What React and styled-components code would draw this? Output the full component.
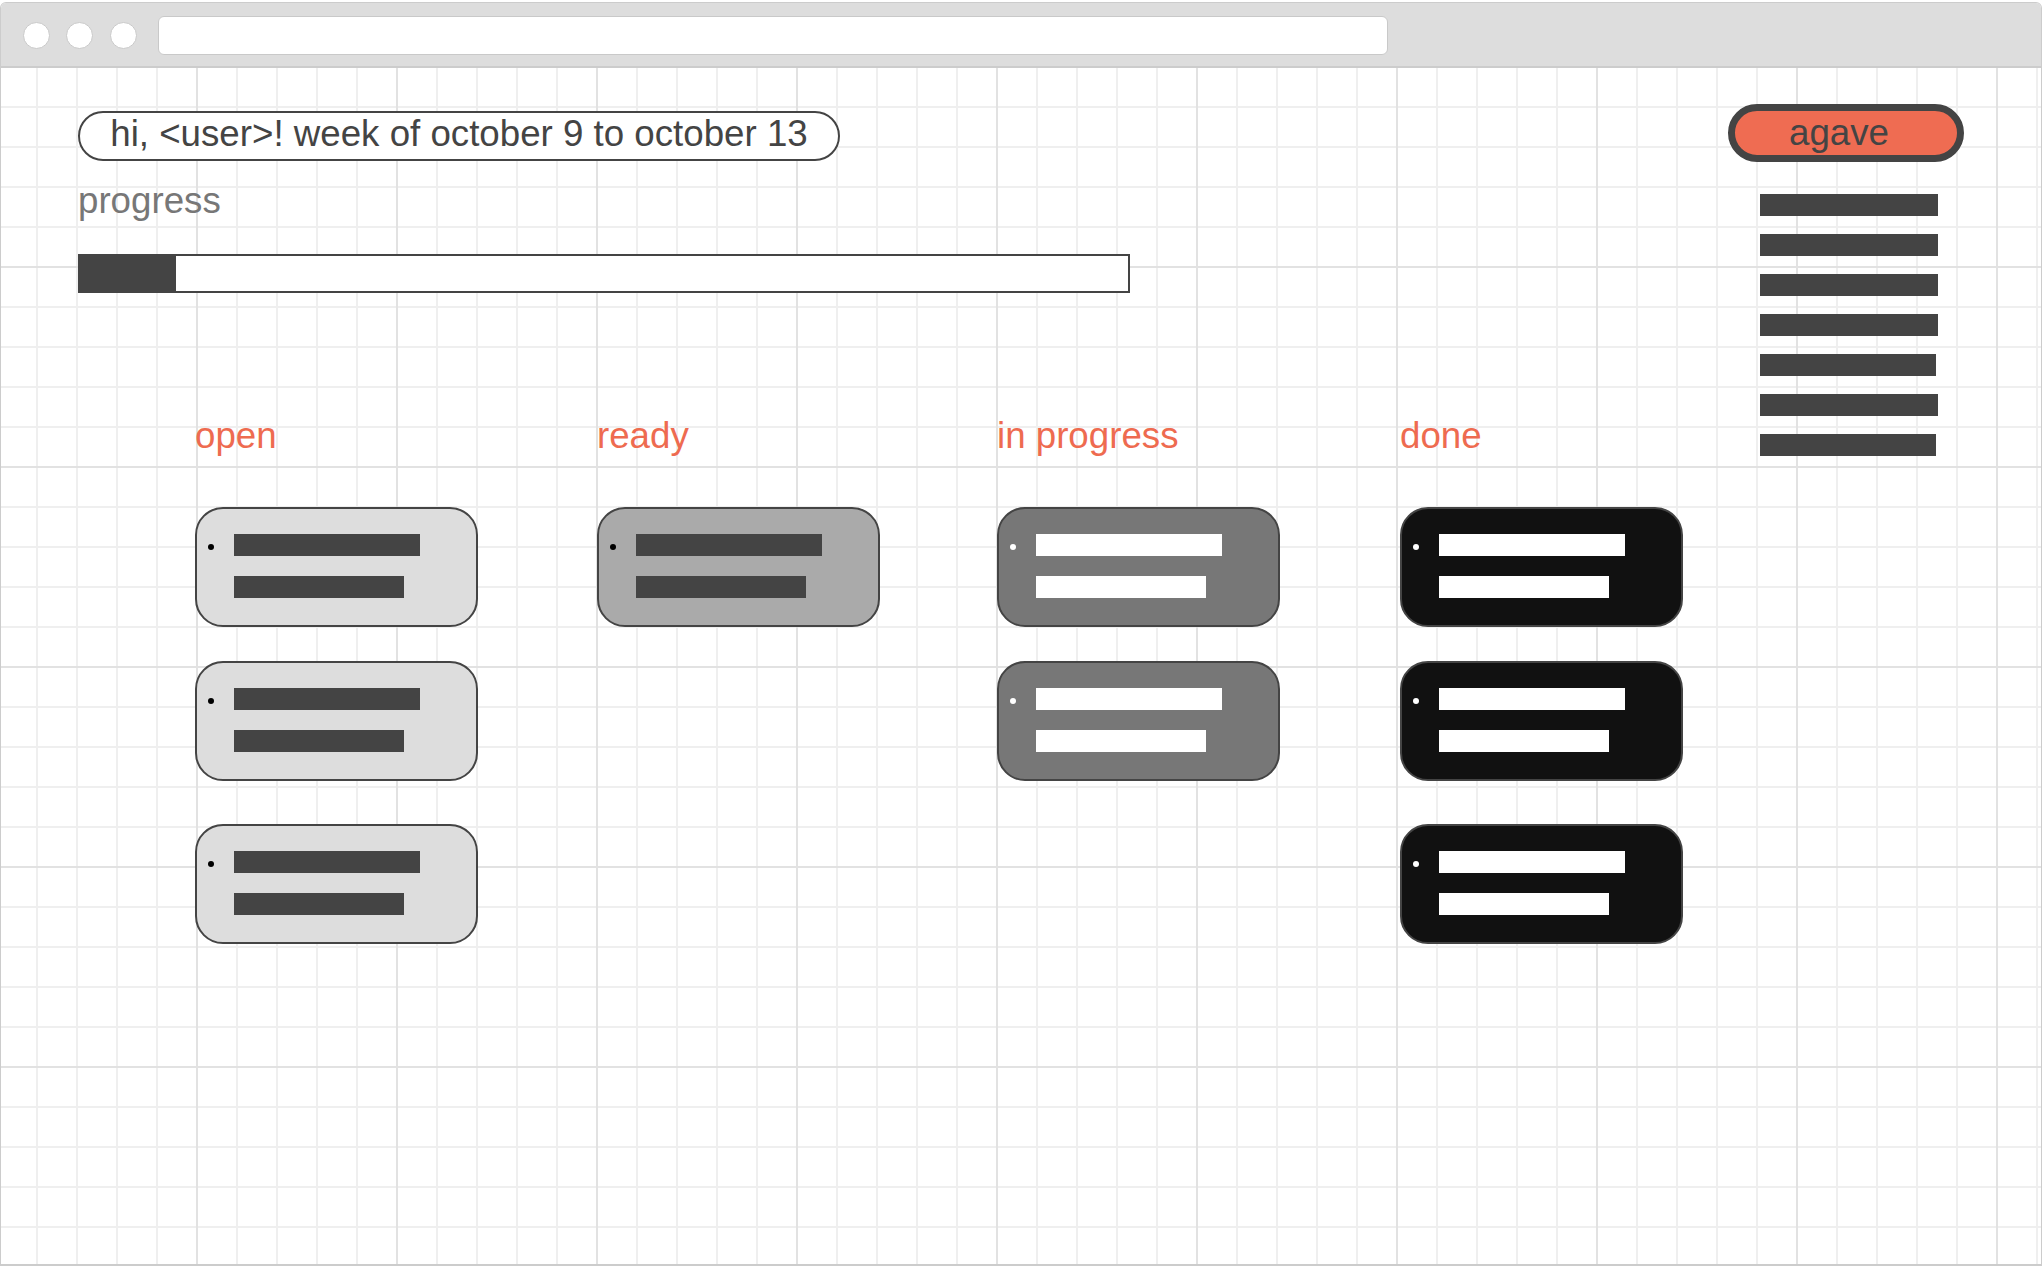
import React from 'react'
import styled, { createGlobalStyle } from 'styled-components'

const GlobalStyle = createGlobalStyle`
  html, body {
    margin: 0;
    padding: 0;
    background: #fff;
    overflow: hidden;
  }
  * {
    box-sizing: border-box;
  }
`

const columns = [
  { title: 'open', tone: 'open', cards: 3 },
  { title: 'ready', tone: 'ready', cards: 1 },
  { title: 'in progress', tone: 'progress', cards: 2 },
  { title: 'done', tone: 'done', cards: 3 },
]

const sideBars = [178, 178, 178, 178, 176, 178, 176]

const tones = {
  open: { bg: '#dddddd', ink: '#444444', dot: '#000000' },
  ready: { bg: '#aaaaaa', ink: '#444444', dot: '#000000' },
  progress: { bg: '#777777', ink: '#ffffff', dot: '#ffffff' },
  done: { bg: '#111111', ink: '#ffffff', dot: '#ffffff' },
}

const App = () => {
  return (
    <>
      <GlobalStyle />
      <Window>
        <TopBar>
          <Light />
          <Light />
          <Light />
          <Address />
        </TopBar>

        <Canvas>
          <Main>
            <Greeting>hi, &lt;user&gt;! week of october 9 to october 13</Greeting>
            <ProgressLabel>progress</ProgressLabel>
            <ProgressTrack>
              <ProgressFill style={{ width: '96px' }} />
            </ProgressTrack>

            <Board>
              {columns.map((col) => (
                <Column key={col.title}>
                  <ColumnTitle>{col.title}</ColumnTitle>
                  <CardStack>
                    {Array.from({ length: col.cards }).map((_, i) => (
                      <Card key={i} $tone={col.tone}>
                        <Dot $tone={col.tone} />
                        <Lines>
                          <Line $tone={col.tone} $w={186} />
                          <Line $tone={col.tone} $w={170} />
                        </Lines>
                      </Card>
                    ))}
                  </CardStack>
                </Column>
              ))}
            </Board>
          </Main>

          <Sidebar>
            <AgaveButton>agave</AgaveButton>
            <MenuList>
              {sideBars.map((w, i) => (
                <MenuBar key={i} $w={w} />
              ))}
            </MenuList>
          </Sidebar>
        </Canvas>
      </Window>
    </>
  )
}

const Window = styled.div`
  margin-top: 2px;
  width: 2042px;
  height: 1264px;
  border: 1px solid #cccccc;
  border-bottom-width: 2px;
  border-radius: 6px 6px 0 0;
  display: flex;
  flex-direction: column;
  overflow: hidden;
  font-family: "Liberation Sans", Arial, sans-serif;
  font-size: 36.7px;
`

const TopBar = styled.div`
  height: 65px;
  padding: 2px 0 0 21.5px;
  background: #dddddd;
  border-bottom: 2px solid #cccccc;
  display: flex;
  align-items: center;
  gap: 16.5px;
  flex-shrink: 0;
`

const Light = styled.span`
  width: 27px;
  height: 27px;
  border-radius: 50%;
  background: #ffffff;
  border: 1.5px solid #c9c9c9;
`

const Address = styled.div`
  margin-left: 4.5px;
  width: 1230px;
  height: 39px;
  background: #ffffff;
  border: 1.5px solid #c9c9c9;
  border-radius: 6px;
`

const Canvas = styled.div`
  flex: 1;
  display: flex;
  padding: 36px 77px 0 77px;
  background-color: #ffffff;
  background-image:
    linear-gradient(to right, #e2e2e2 0 2px, transparent 2px),
    linear-gradient(to bottom, #e2e2e2 0 2px, transparent 2px),
    linear-gradient(to right, #efefef 0 2px, transparent 2px),
    linear-gradient(to bottom, #efefef 0 2px, transparent 2px);
  background-size: 200px 200px, 200px 200px, 40px 40px, 40px 40px;
  background-position: -5px -2px, -5px -2px, -5px -2px, -5px -2px;
`

const Main = styled.div`
  flex: 1;
  padding-top: 7px;
  display: flex;
  flex-direction: column;
  align-items: flex-start;
`

const Greeting = styled.div`
  width: 762px;
  height: 50px;
  padding-bottom: 5px;
  border: 2px solid #444444;
  border-radius: 25px;
  background: #ffffff;
  color: #444444;
  line-height: 42px;
  text-align: center;
  white-space: nowrap;
`

const ProgressLabel = styled.div`
  margin-top: 21.5px;
  color: #777777;
  line-height: 36px;
`

const ProgressTrack = styled.div`
  margin-top: 35.5px;
  width: 1052px;
  height: 39px;
  border: 2px solid #444444;
  background: #ffffff;
`

const ProgressFill = styled.div`
  height: 100%;
  background: #444444;
`

const Board = styled.div`
  margin-top: 124.5px;
  padding-left: 117px;
  display: grid;
  grid-template-columns: 402px 400px 403px 283px;
`

const Column = styled.div`
  display: flex;
  flex-direction: column;
`

const ColumnTitle = styled.div`
  color: #ee6b50;
  line-height: 36px;
`

const CardStack = styled.div`
  margin-top: 53.5px;
  display: flex;
  flex-direction: column;
  gap: 34px;

  & > :nth-child(3) {
    margin-top: 9px;
  }
`

const Card = styled.div`
  width: 283px;
  height: 120px;
  padding: 25px 0 0 10.5px;
  border: 2px solid #444444;
  border-radius: 28px;
  background: ${(p) => tones[p.$tone].bg};
  display: flex;
  align-items: flex-start;
`

const Dot = styled.span`
  width: 6px;
  height: 6px;
  margin-top: 10px;
  margin-right: 20.5px;
  border-radius: 50%;
  background: ${(p) => tones[p.$tone].dot};
  flex-shrink: 0;
`

const Lines = styled.div`
  display: flex;
  flex-direction: column;
  gap: 20px;
`

const Line = styled.span`
  display: block;
  width: ${(p) => p.$w}px;
  height: 22px;
  background: ${(p) => tones[p.$tone].ink};
`

const Sidebar = styled.div`
  width: 236px;
  display: flex;
  flex-direction: column;
`

const AgaveButton = styled.div`
  width: 236px;
  height: 58px;
  padding-right: 14px;
  border: 7px solid #444444;
  border-radius: 29px;
  background: #ef6c52;
  color: #444444;
  line-height: 43px;
  text-align: center;
`

const MenuList = styled.div`
  margin-top: 32px;
  padding-left: 32px;
  display: flex;
  flex-direction: column;
  gap: 18px;
`

const MenuBar = styled.span`
  display: block;
  width: ${(p) => p.$w}px;
  height: 22px;
  background: #444444;
`

export default App
